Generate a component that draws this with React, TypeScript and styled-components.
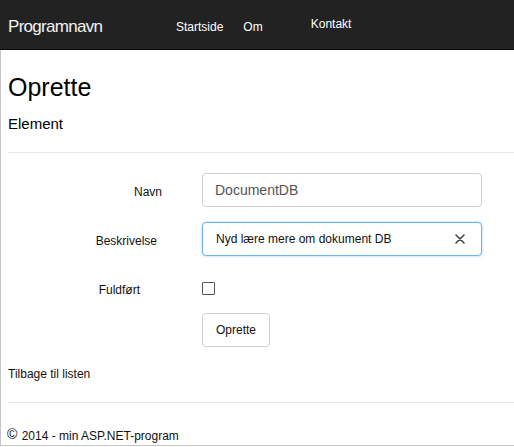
import React from "react";
import styled, { createGlobalStyle } from "styled-components";

const GlobalStyle = createGlobalStyle`
  html, body {
    margin: 0;
    padding: 0;
    background: #fff;
  }
  body {
    font-family: "Liberation Sans", Arial, sans-serif;
    color: #1a1a1a;
  }
`;

const Navbar = styled.header`
  display: flex;
  align-items: flex-start;
  height: 49px;
  padding-left: 8px;
  background: #222;
  border-bottom: 1px solid #080808;
`;

const Brand = styled.div`
  width: 168px;
  margin-top: 17px;
  font-size: 17px;
  line-height: 20px;
  letter-spacing: -0.7px;
  color: #f2f2f2;
`;

const NavList = styled.nav`
  display: flex;
  align-items: flex-start;
`;

const NavLink = styled.a<{ $top: number; $gap: number }>`
  margin-top: ${(p) => p.$top}px;
  margin-left: ${(p) => p.$gap}px;
  font-size: 12px;
  line-height: 16px;
  color: #fff;
  text-decoration: none;
  cursor: pointer;
`;

const Frame = styled.main`
  width: 511px;
  height: 395px;
  border-left: 1px solid #c4c4c4;
  border-right: 1px solid #c4c4c4;
  border-bottom: 1px solid #c4c4c4;
  padding-left: 7px;
  box-sizing: content-box;
  display: flex;
  flex-direction: column;
`;

const Title = styled.h2`
  margin: 22px 0 0;
  font-size: 25px;
  line-height: 30px;
  font-weight: 400;
  color: #000;
`;

const Subtitle = styled.h4`
  margin: 12px 0 0;
  font-size: 15px;
  line-height: 20px;
  font-weight: 400;
  color: #000;
`;

const Rule = styled.hr<{ $top: number }>`
  margin: ${(p) => p.$top}px 0 0;
  border: 0;
  border-top: 1px solid #e8e8e8;
  height: 0;
`;

const Form = styled.form`
  display: flex;
  flex-direction: column;
`;

const Row = styled.div<{ $top: number }>`
  display: grid;
  grid-template-columns: 194px 280px;
  align-items: center;
  margin-top: ${(p) => p.$top}px;
`;

const Label = styled.label<{ $right: number }>`
  padding-right: ${(p) => p.$right}px;
  padding-top: 4px;
  text-align: right;
  font-size: 12px;
  line-height: 16px;
  color: #111;
`;

const Field = styled.div<{ $focused?: boolean }>`
  display: flex;
  align-items: center;
  height: 34px;
  box-sizing: border-box;
  padding: 0 16px 0 ${(p) => (p.$focused ? 13 : 12)}px;
  border: 1px solid ${(p) => (p.$focused ? "#6fb1ea" : "#cfcfcf")};
  border-radius: 4px;
  background: #fff;
  box-shadow: ${(p) =>
    p.$focused ? "0 0 3px rgba(102, 175, 233, 0.55)" : "none"};
`;

const FieldText = styled.input<{ $muted?: boolean }>`
  flex: 1;
  min-width: 0;
  border: 0;
  outline: none;
  padding: 0;
  background: transparent;
  font-family: "Liberation Sans", Arial, sans-serif;
  font-size: ${(p) => (p.$muted ? 14 : 12)}px;
  color: ${(p) => (p.$muted ? "#555" : "#111")};
`;

const ClearButton = styled.span`
  display: flex;
  align-items: center;
  justify-content: center;
  width: 10px;
  height: 10px;
  color: #444;
`;

const Check = styled.input`
  appearance: none;
  margin: 0;
  width: 13px;
  height: 13px;
  border: 1px solid #555;
  border-radius: 1px;
  background: #fff;
`;

const CheckCell = styled.div`
  display: flex;
  align-items: center;
  height: 20px;
`;

const SubmitButton = styled.button`
  justify-self: start;
  height: 34px;
  padding: 0 13px;
  border: 1px solid #cfcfcf;
  border-radius: 4px;
  background: #fff;
  font-family: "Liberation Sans", Arial, sans-serif;
  font-size: 12px;
  color: #111;
`;

const BackLink = styled.a`
  display: block;
  margin-top: 18px;
  font-size: 12px;
  line-height: 18px;
  color: #111;
  text-decoration: none;
`;

const Footer = styled.footer`
  margin-top: 22px;
  font-size: 12px;
  line-height: 18px;
  color: #111;
  margin-left: -1px;
`;

const Copy = styled.span`
  font-size: 14px;
  vertical-align: 1px;
  margin-right: 1px;
`;

export default function App() {
  return (
    <>
      <GlobalStyle />
      <Navbar>
        <Brand>Programnavn</Brand>
        <NavList>
          <NavLink $top={19} $gap={0}>Startside</NavLink>
          <NavLink $top={19} $gap={20}>Om</NavLink>
          <NavLink $top={16} $gap={48}>Kontakt</NavLink>
        </NavList>
      </Navbar>
      <Frame>
        <Title>Oprette</Title>
        <Subtitle>Element</Subtitle>
        <Rule $top={18} />
        <Form onSubmit={(e) => e.preventDefault()}>
          <Row $top={20}>
            <Label $right={40}>Navn</Label>
            <Field>
              <FieldText $muted defaultValue="DocumentDB" />
            </Field>
          </Row>
          <Row $top={15}>
            <Label $right={45}>Beskrivelse</Label>
            <Field $focused>
              <FieldText defaultValue="Nyd lære mere om dokument DB" />
              <ClearButton>
                <svg width="10" height="10" viewBox="0 0 10 10">
                  <path
                    d="M1 1L9 9M9 1L1 9"
                    stroke="currentColor"
                    strokeWidth="1.6"
                    strokeLinecap="round"
                  />
                </svg>
              </ClearButton>
            </Field>
          </Row>
          <Row $top={22}>
            <Label $right={62}>Fuldført</Label>
            <CheckCell>
              <Check type="checkbox" />
            </CheckCell>
          </Row>
          <Row $top={15}>
            <span />
            <SubmitButton type="submit">Oprette</SubmitButton>
          </Row>
        </Form>
        <BackLink>Tilbage til listen</BackLink>
        <Rule $top={19} />
        <Footer>
          <Copy>©</Copy> 2014 - min ASP.NET-program
        </Footer>
      </Frame>
    </>
  );
}
